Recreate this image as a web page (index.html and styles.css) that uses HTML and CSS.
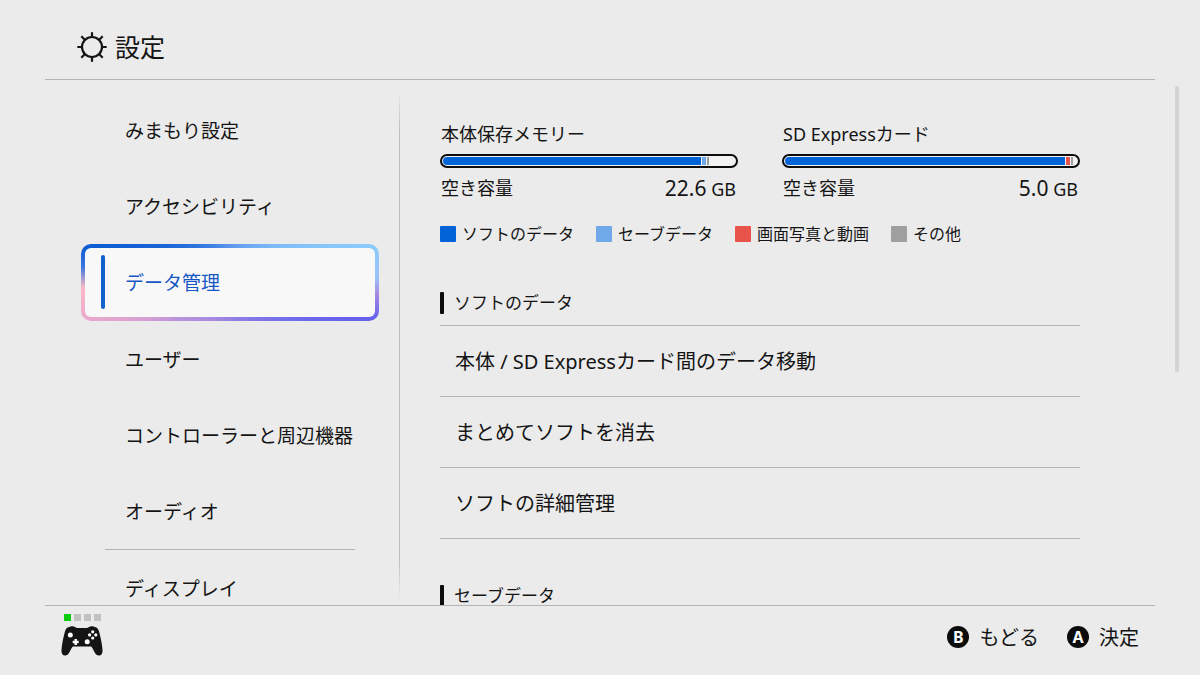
FILE: index.html
```html
<!DOCTYPE html>
<html lang="ja">
<head>
    <meta charset="utf-8">
    <title>設定</title>
    <link rel="stylesheet" href="styles.css">
</head>
<body>
    <header>
        <svg class="gear" viewBox="0 0 30 30" width="30" height="30" fill="none" stroke="currentColor" stroke-width="2.2">
            <circle cx="15" cy="15" r="10"/>
            <path d="M15 5V.3M15 25v4.700M5 15H.3M25 15h4.700M8 8 4.300 4.300M22 8l3.700-3.700M8 22l-3.700 3.700M22 22l3.700 3.700"/>
        </svg>
        <h1>設定</h1>
    </header>

    <main>
        <nav>
            <button>みまもり設定</button>
            <button>アクセシビリティ</button>
            <button class="selected" aria-current="true">データ管理</button>
            <button>ユーザー</button>
            <button>コントローラーと周辺機器</button>
            <button>オーディオ</button>
            <hr>
            <button>ディスプレイ</button>
        </nav>
        <div class="divider"></div>

        <div class="content">
            <div class="storages">
                <section class="storage">
                    <h2>本体保存メモリー</h2>
                    <div class="bar">
                        <span class="soft" style="width: 88.5%"></span>
                        <span class="save" style="width: 1.4%"></span>
                        <span class="other" style="width: 0.6%"></span>
                    </div>
                    <div class="free"><span>空き容量</span><span><b>22.6</b> GB</span></div>
                </section>
                <section class="storage">
                    <h2>SD Expressカード</h2>
                    <div class="bar">
                        <span class="soft" style="width: 96%"></span>
                        <span class="media" style="width: 1.2%"></span>
                        <span class="other" style="width: 0.6%"></span>
                    </div>
                    <div class="free"><span>空き容量</span><span><b>5.0</b> GB</span></div>
                </section>
            </div>

            <ul class="legend">
                <li><i class="soft"></i>ソフトのデータ</li>
                <li><i class="save"></i>セーブデータ</li>
                <li><i class="media"></i>画面写真と動画</li>
                <li><i class="other"></i>その他</li>
            </ul>

            <h3>ソフトのデータ</h3>
            <ul class="list">
                <li><button>本体 / SD Expressカード間のデータ移動</button></li>
                <li><button>まとめてソフトを消去</button></li>
                <li><button>ソフトの詳細管理</button></li>
            </ul>

            <h3>セーブデータ</h3>
        </div>
        <div class="scrollbar"></div>
    </main>

    <footer>
        <div class="controller">
            <div class="players"><i class="on"></i><i></i><i></i><i></i></div>
            <svg viewBox="0 0 42 30" width="42" height="30">
                <path fill="#141414" d="M9 .7c2-.9 4-.5 5.400.5.800.5 1.200.8 2 .8h9.200c.8 0 1.200-.3 2-.8C29 .2 31 -.2 33 .7c2.600.4 4.200 1.800 4.900 4.300 1.700 6.400 3.300 13 3.600 19 .2 3.300-1.100 5.400-3.400 5.500-2 .1-3.200-1-4.200-2.800l-2.700-5c-.5-.9-1-1.200-2-1.200H12.800c-1 0-1.500.3-2 1.200l-2.700 5c-1 1.800-2.200 2.900-4.200 2.800C1.600 29.400.3 27.300.5 24c.3-6 1.900-12.600 3.600-19C4.800 2.500 6.400 1.100 9 .7z"/>
                <g fill="#fff">
                    <circle cx="9.300" cy="9" r="2.500"/>
                    <circle cx="26.200" cy="15.800" r="2.500"/>
                    <path d="M13.500 13h2.400v1.800h1.800v2.400h-1.800V19h-2.400v-1.800h-1.800v-2.400h1.800z"/>
                    <circle cx="31.700" cy="5.800" r="1.600"/>
                    <circle cx="31.700" cy="12" r="1.600"/>
                    <circle cx="28.600" cy="8.900" r="1.600"/>
                    <circle cx="34.800" cy="8.900" r="1.600"/>
                </g>
            </svg>
        </div>
        <div class="actions">
            <button><span class="key">B</span>もどる</button>
            <button><span class="key">A</span>決定</button>
        </div>
    </footer>
</body>
</html>
```
FILE: styles.css
```css
:root {
    --bg: #ebebeb;
    --text: #141414;
    --line: #b4b4b4;
    --blue: #0064d8;
    --light-blue: #70a9e9;
    --red: #e8534a;
    --gray: #9f9f9f;
}

* {
    box-sizing: border-box;
}

body {
    margin: 0;
    height: 100vh;
    display: flex;
    flex-direction: column;
    background: var(--bg);
    color: var(--text);
    font-family: "Noto Sans", "Noto Sans CJK JP", sans-serif;
    font-weight: 400;
}

h1, h2, h3, ul {
    margin: 0;
    padding: 0;
    font-weight: inherit;
    list-style: none;
}

button {
    border: none;
    padding: 0;
    background: none;
    color: inherit;
    font: inherit;
    text-align: left;
    cursor: pointer;
}

header {
    display: flex;
    align-items: center;
    gap: 8px;
    height: 80px;
    flex-shrink: 0;
    margin: 0 45px;
    padding: 26px 32px 12px;
    border-bottom: 1px solid var(--line);
}

h1 {
    font-size: 25px;
    line-height: 30px;
}

main {
    flex: 1;
    min-height: 0;
    overflow: hidden;
    position: relative;
    display: flex;
    padding: 0 45px;
}

nav {
    display: flex;
    flex-direction: column;
    flex-shrink: 0;
    width: 334px;
    padding: 12px 0 0 36px;
}

nav button {
    flex-shrink: 0;
    height: 76px;
    padding: 0 44px 1px;
    font-size: 19px;
    white-space: nowrap;
}

nav .selected {
    display: flex;
    align-items: center;
    height: 77px;
    padding: 0 16px 1px;
    gap: 20px;
    border: 4px solid transparent;
    border-radius: 10px;
    color: #1556c5;
    background:
        linear-gradient(#f8f8f8, #f8f8f8) padding-box,
        conic-gradient(#5b96ee 0deg, #8ccafb 76deg, #98c4f8 88deg, #a98ce0 94deg, #6460ee 104deg, #7a72ea 130deg, #b892dc 235deg, #eba9cc 256deg, #fbb9c6 268deg, #3c78de 276deg, #0c5bd2 284deg, #5b96ee 360deg) border-box;
}

nav .selected::before {
    content: "";
    width: 4px;
    height: 54px;
    border-radius: 2px;
    background: #1260cc;
}

nav hr {
    flex-shrink: 0;
    width: 250px;
    margin: 0 24px;
    border: none;
    border-top: 1px solid var(--line);
}

.divider {
    width: 1px;
    margin: 10px 0 5px 20px;
    background: linear-gradient(transparent, #bdbdbd 8%, #bdbdbd 92%, transparent);
}

.content {
    flex: 1;
    padding: 42px 75px 0 40px;
}

.storages {
    display: grid;
    grid-template-columns: 1fr 1fr;
    gap: 44px;
}

.storage h2 {
    padding-left: 1px;
    font-size: 18px;
    line-height: 24px;
}

.bar {
    display: flex;
    gap: 1px;
    height: 14px;
    margin: 8px 0 6px;
    padding: 1px;
    border: 2px solid #0c0c0c;
    border-radius: 7px;
    background: #f2f2f2;
}

.bar .soft {
    border-radius: 4px 0 0 4px;
}

.soft { background: var(--blue); }
.save { background: var(--light-blue); }
.media { background: var(--red); }
.other { background: var(--gray); }

.free {
    display: flex;
    justify-content: space-between;
    padding: 0 2px 0 1px;
    font-size: 18px;
    line-height: 28px;
}

.free b {
    font-size: 21px;
    font-weight: inherit;
}

.legend {
    display: flex;
    gap: 22px;
    margin-top: 19px;
    font-size: 16px;
    line-height: 24px;
    white-space: nowrap;
}

.legend li {
    display: flex;
    align-items: center;
    gap: 6px;
}

.legend i {
    width: 16px;
    height: 16px;
    border-radius: 1px;
}

h3 {
    display: flex;
    align-items: center;
    gap: 10px;
    margin: 46px 0 11px;
    font-size: 17px;
    line-height: 22px;
}

h3::before {
    content: "";
    width: 4px;
    height: 22px;
    border-radius: 1px;
    background: #0c0c0c;
}

.list {
    border-top: 1px solid var(--line);
}

.list li {
    border-bottom: 1px solid var(--line);
}

.list button {
    width: 100%;
    height: 70px;
    padding: 0 15px 2px;
    font-size: 20px;
}

.scrollbar {
    position: absolute;
    top: 6px;
    right: 21px;
    width: 4px;
    height: 286px;
    border-radius: 2px;
    background: #d3d3d3;
}

footer {
    display: flex;
    justify-content: space-between;
    align-items: center;
    flex-shrink: 0;
    height: 70px;
    margin: 0 45px;
    padding: 0 16px 8px;
    border-top: 1px solid var(--line);
}

.controller {
    padding-bottom: 4px;
}

.players {
    display: flex;
    gap: 3px;
    margin: 0 0 5px 3px;
}

.players i {
    width: 7px;
    height: 7px;
    background: #c2c2c2;
}

.players .on {
    background: #0bcc0b;
}

.controller svg {
    display: block;
}

.actions {
    display: flex;
    gap: 28px;
}

.actions button {
    display: flex;
    align-items: center;
    gap: 10px;
    font-size: 20px;
}

.key {
    width: 22px;
    height: 22px;
    border-radius: 50%;
    background: #0c0c0c;
    color: #fff;
    font: bold 16px/22px "Noto Sans", sans-serif;
    text-align: center;
}
```
